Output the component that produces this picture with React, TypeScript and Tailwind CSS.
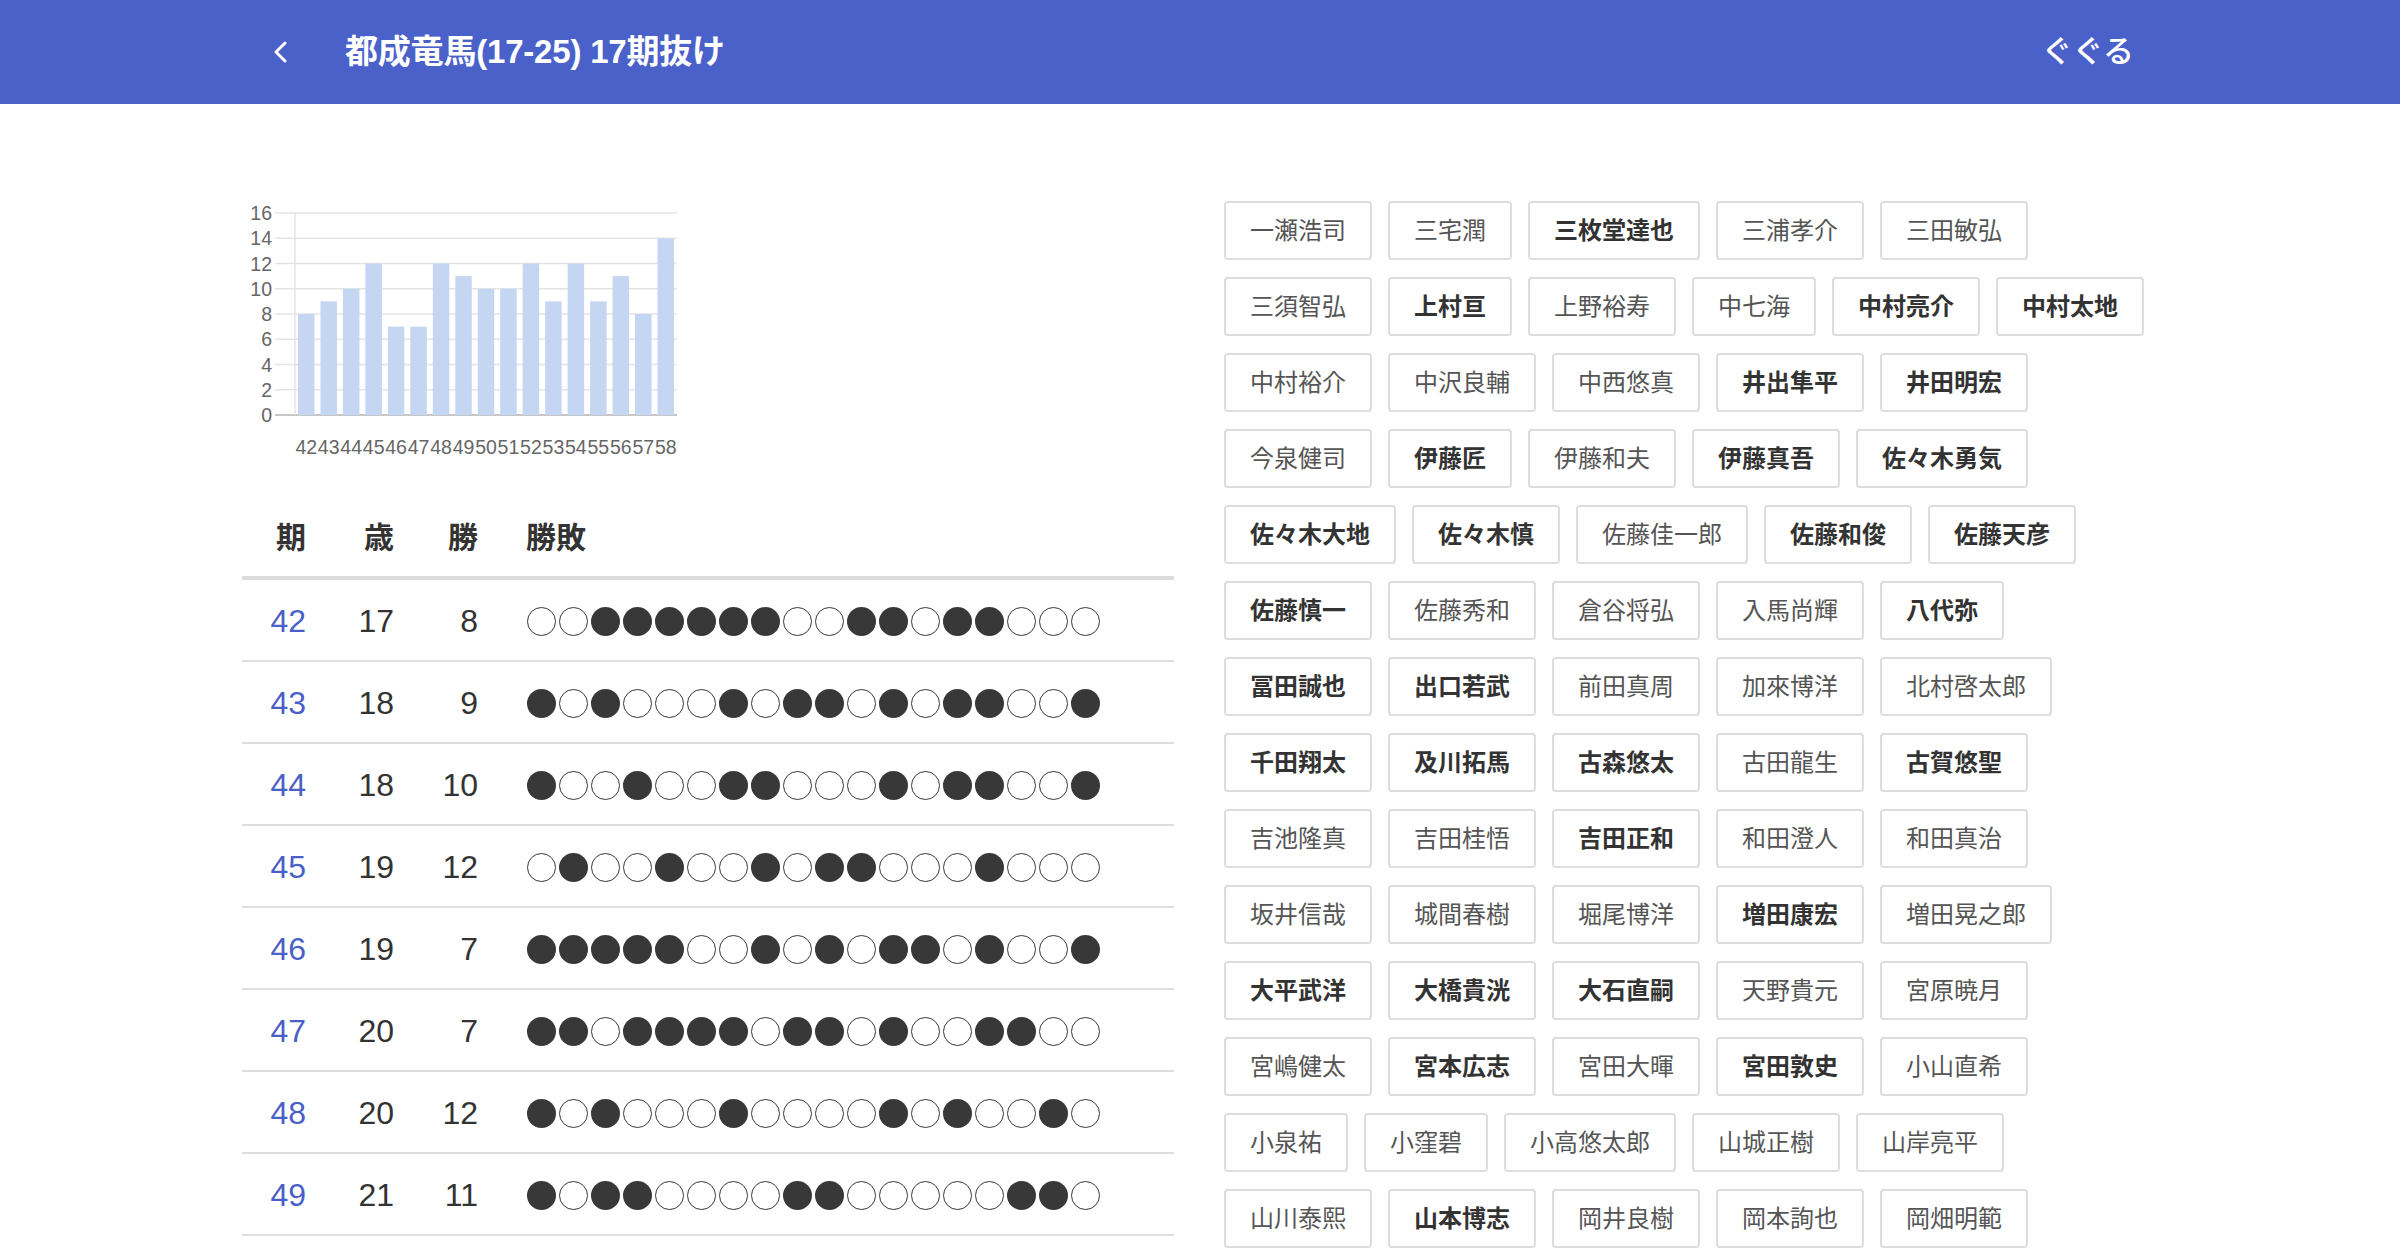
import React from "react";

const bars = [8, 9, 10, 12, 7, 7, 12, 11, 10, 10, 12, 9, 12, 9, 11, 8, 14];

// ○ = 勝ち, ● = 負け
const rows = [
  { ki: 42, age: 17, win: 8, res: "○○●●●●●●○○●●○●●○○○" },
  { ki: 43, age: 18, win: 9, res: "●○●○○○●○●●○●○●●○○●" },
  { ki: 44, age: 18, win: 10, res: "●○○●○○●●○○○●○●●○○●" },
  { ki: 45, age: 19, win: 12, res: "○●○○●○○●○●●○○○●○○○" },
  { ki: 46, age: 19, win: 7, res: "●●●●●○○●○●○●●○●○○●" },
  { ki: 47, age: 20, win: 7, res: "●●○●●●●○●●○●○○●●○○" },
  { ki: 48, age: 20, win: 12, res: "●○●○○○●○○○○●○●○○●○" },
  { ki: 49, age: 21, win: 11, res: "●○●●○○○○●●○○○○○●●○" },
];

// "*" 付きは太字
const names = [
  "一瀬浩司", "三宅潤", "*三枚堂達也", "三浦孝介", "三田敏弘",
  "三須智弘", "*上村亘", "上野裕寿", "中七海", "*中村亮介", "*中村太地",
  "中村裕介", "中沢良輔", "中西悠真", "*井出隼平", "*井田明宏",
  "今泉健司", "*伊藤匠", "伊藤和夫", "*伊藤真吾", "*佐々木勇気",
  "*佐々木大地", "*佐々木慎", "佐藤佳一郎", "*佐藤和俊", "*佐藤天彦",
  "*佐藤慎一", "佐藤秀和", "倉谷将弘", "入馬尚輝", "*八代弥",
  "*冨田誠也", "*出口若武", "前田真周", "加來博洋", "北村啓太郎",
  "*千田翔太", "*及川拓馬", "*古森悠太", "古田龍生", "*古賀悠聖",
  "吉池隆真", "吉田桂悟", "*吉田正和", "和田澄人", "和田真治",
  "坂井信哉", "城間春樹", "堀尾博洋", "*増田康宏", "増田晃之郎",
  "*大平武洋", "*大橋貴洸", "*大石直嗣", "天野貴元", "宮原暁月",
  "宮嶋健太", "*宮本広志", "宮田大暉", "*宮田敦史", "小山直希",
  "小泉祐", "小窪碧", "小高悠太郎", "山城正樹", "山岸亮平",
  "山川泰熙", "*山本博志", "岡井良樹", "岡本詢也", "岡畑明範",
];

const Header = () => (
  <header className="h-[104px] bg-[#4a61c9] text-white flex items-center justify-between pl-[273px] pr-[266px]">
    <div className="flex items-center">
      <button aria-label="戻る" className="flex items-center">
        <svg width="14" height="22" viewBox="0 0 14 22">
          <polyline points="12,2 3,11 12,20" fill="none" stroke="white" strokeWidth="3" strokeLinecap="round" strokeLinejoin="round" />
        </svg>
      </button>
      <h1 className="ml-[58px] text-[33px] font-bold tracking-[-0.2px]">都成竜馬(17-25) 17期抜け</h1>
    </div>
    <span className="text-[31px] font-medium">ぐぐる</span>
  </header>
);

const WinChart = () => {
  const y = (v: number) => 215 - v * 12.625;
  const cw = 382 / 17;
  return (
    <svg width="440" height="270" viewBox="0 0 440 270" fontFamily="Liberation Sans, sans-serif">
      {[0, 2, 4, 6, 8, 10, 12, 14, 16].map((v) => (
        <g key={v}>
          <line x1="33" x2="435" y1={y(v)} y2={y(v)} stroke={v === 0 ? "#b4b4b4" : "#e4e4e4"} strokeWidth="1.5" />
          <text x="30" y={y(v) + 7} fontSize="19.5" fill="#666" textAnchor="end">
            {v}
          </text>
        </g>
      ))}
      <line x1="53" x2="53" y1={y(16)} y2={y(0)} stroke="#e4e4e4" strokeWidth="1.5" />
      {bars.map((v, i) => (
        <rect key={i} x={53 + i * cw + (cw - 16.5) / 2} y={y(v)} width="16.5" height={v * 12.625} fill="#c5d6f3" />
      ))}
      {bars.map((_, i) => (
        <text key={i} x={53 + (i + 0.5) * cw} y="254" fontSize="19.5" fill="#666" textAnchor="middle">
          {42 + i}
        </text>
      ))}
    </svg>
  );
};

const Marks = ({ res }: { res: string }) => (
  <div className="flex gap-[3px]" aria-label={res}>
    {Array.from(res).map((c, i) =>
      c === "●" ? (
        <span key={i} className="w-[29px] h-[29px] rounded-full bg-[#383838]" />
      ) : (
        <span key={i} className="w-[29px] h-[29px] rounded-full border-[1.5px] border-[#383838]" />
      )
    )}
  </div>
);

const ResultTable = () => (
  <div className="mt-[28px] w-[932px]">
    <div className="grid grid-cols-[80px_88px_84px_1fr] h-[82px] items-center border-b-4 border-[#dddddd] text-[30px] font-bold text-[#333]">
      <div className="text-right pr-4">期</div>
      <div className="text-right pr-4">歳</div>
      <div className="text-right pr-4">勝</div>
      <div className="pl-[32px]">勝敗</div>
    </div>
    {rows.map((r) => (
      <div key={r.ki} className="grid grid-cols-[80px_88px_84px_1fr] h-[82px] items-center border-b-2 border-[#dddddd] text-[32px] text-[#333]">
        <div className="text-right pr-4 text-[#4a5fc8] pt-[2px]">{r.ki}</div>
        <div className="text-right pr-4 pt-[2px]">{r.age}</div>
        <div className="text-right pr-4 pt-[2px]">{r.win}</div>
        <div className="pl-[33px] pt-[2px]">
          <Marks res={r.res} />
        </div>
      </div>
    ))}
  </div>
);

const NameChips = () => (
  <div className="w-[930px] flex flex-wrap content-start gap-x-4 gap-y-[17px] pt-px">
    {names.map((n) => {
      const bold = n.startsWith("*");
      return (
        <button
          key={n}
          className={
            "border-2 border-[#dddddd] rounded-[4px] px-[24px] py-[9px] text-[24px] leading-[37px] bg-white " +
            (bold ? "font-bold text-[#333]" : "text-[#555]")
          }
        >
          {bold ? n.slice(1) : n}
        </button>
      );
    })}
  </div>
);

export default function App() {
  return (
    <div className="min-h-screen bg-white font-['Liberation_Sans','Noto_Sans_CJK_JP',sans-serif]">
      <Header />
      <main className="flex pl-[242px] pt-[96px]">
        <div className="w-[932px] shrink-0">
          <WinChart />
          <ResultTable />
        </div>
        <div className="ml-[50px] flex">
          <NameChips />
        </div>
      </main>
    </div>
  );
}
